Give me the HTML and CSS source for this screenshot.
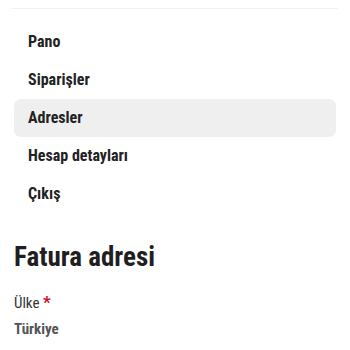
FILE: index.html
```html
<!DOCTYPE html>
<html lang="tr">
<head>
<meta charset="utf-8">
<link rel="stylesheet" href="styles.css">
</head>
<body>
<div class="page">
  <div class="topline"></div>
  <nav class="menu">
    <a class="item">Pano</a>
    <a class="item">Siparişler</a>
    <a class="item active">Adresler</a>
    <a class="item">Hesap detayları</a>
    <a class="item">Çıkış</a>
  </nav>
  <h2 class="title">Fatura adresi</h2>
  <div class="field">
    <div class="label">Ülke <span class="req">*</span></div>
    <div class="value">Türkiye</div>
  </div>
</div>
</body>
</html>
```
FILE: styles.css
```css
html, body { margin: 0; padding: 0; background: #fff; }
body { font-family: Roboto, "Noto Sans", sans-serif; color: #222; font-stretch: 84%; }
.page { padding: 0 14px; }
.topline { height: 8px; border-bottom: 1px solid #f1f1f1; margin: 0 -2px 14px; }
.menu { display: flex; flex-direction: column; }
.item {
  display: block;
  height: 38px;
  line-height: 38px;
  padding: 0 14px;
  font-size: 16px;
  font-weight: 700;
  color: #222;
  border-radius: 7px;
}
.item.active { background: #efefef; }
.title {
  margin: 28px 0 0;
  font-size: 27px;
  line-height: 32px;
  font-weight: 700;
  color: #1f1f22;
}
.field { margin-top: 19px; }
.label { font-size: 15px; line-height: 20px; color: #333; }
.req { color: #c8102e; font-weight: 700; font-size: 17px; }
.value { margin-top: 6px; font-size: 15px; line-height: 20px; font-weight: 700; color: #555; }
```
